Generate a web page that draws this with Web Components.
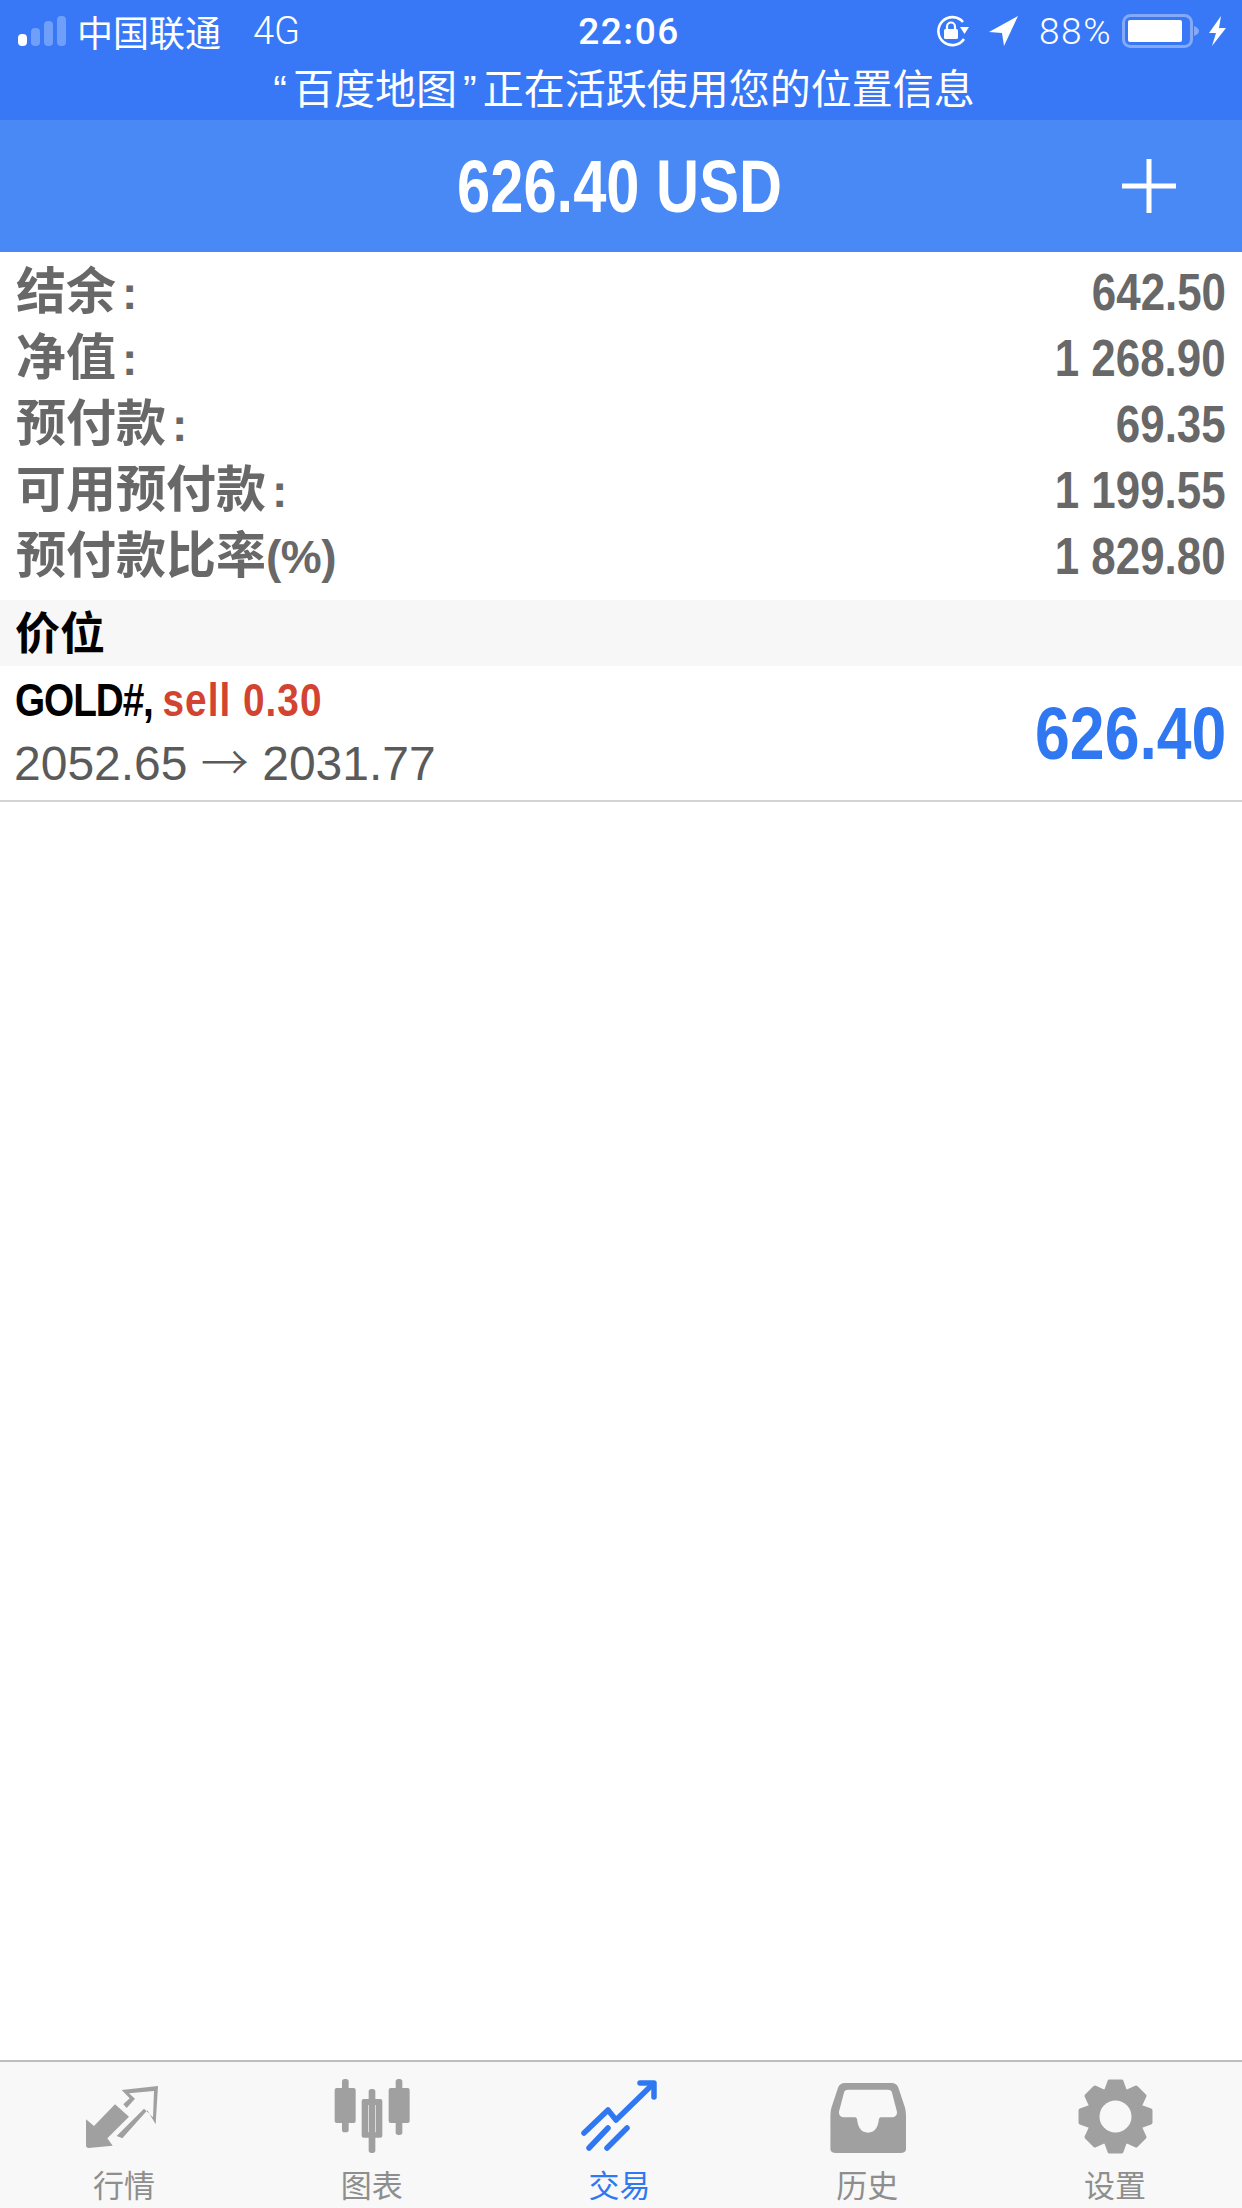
<!DOCTYPE html>
<html lang="zh">
<head>
<meta charset="utf-8">
<style>
  html, body { margin: 0; padding: 0; background: #fff; }
  body { width: 1242px; height: 2208px; overflow: hidden; display: flex; flex-direction: column;
    font-family: "Liberation Sans", "Noto Sans CJK SC", sans-serif; }
  main-list { flex: 1; display: block; }
</style>
</head>
<body>
<status-bar></status-bar>
<top-header amount="626.40 USD"></top-header>
<main-list>
  <account-row label="结余" colon value="642.50"></account-row>
  <account-row label="净值" colon value="1 268.90"></account-row>
  <account-row label="预付款" colon value="69.35"></account-row>
  <account-row label="可用预付款" colon value="1 199.55"></account-row>
  <account-row label="预付款比率" suffix="(%)" value="1 829.80"></account-row>
  <section-head>价位</section-head>
  <position-row symbol="GOLD#," side="sell 0.30" open="2052.65" close="2031.77" profit="626.40"></position-row>
</main-list>
<tab-bar></tab-bar>

<script>
const LATIN = '"Liberation Sans", "Noto Sans CJK SC", sans-serif';
const CJK = '"Noto Sans CJK SC", sans-serif';

class StatusBar extends HTMLElement {
  connectedCallback() {
    this.attachShadow({ mode: "open" }).innerHTML = `
      <style>
        :host { display: block; height: 120px; background: #3878f6; color: #fff; font-family: ${LATIN}; }
        .top { height: 62px; display: grid; grid-template-columns: 1fr auto 1fr; align-items: center; padding: 0 16px 0 18px; }
        .left, .right { display: flex; align-items: center; }
        .right { justify-content: flex-end; }
        .signal { display: flex; align-items: flex-end; gap: 4px; height: 30px; margin-right: 11px; }
        .signal i { width: 9px; border-radius: 4px; background: #6f9ff8; }
        .carrier { font-size: 36px; }
        .net { font-size: 38px; margin-left: 32px; font-family: Roboto, sans-serif; font-weight: 300; }
        .time { font-family: Roboto, sans-serif; font-weight: 500; font-size: 37px; letter-spacing: 1.5px; margin-left: 14px; }
        .pct { font-family: Roboto, sans-serif; font-weight: 300; font-size: 37px; letter-spacing: 1.5px; margin: 0 10px 0 21px; }
        .note { height: 58px; text-align: center; font-size: 41px; line-height: 56px; }
        .q { margin: 0 6px; }
        svg { display: block; }
      </style>
      <div class="top">
        <div class="left">
          <div class="signal"><i style="height:12px;background:#fff"></i><i style="height:18px"></i><i style="height:25px"></i><i style="height:30px"></i></div>
          <span class="carrier">中国联通</span><span class="net">4G</span>
        </div>
        <span class="time">22:06</span>
        <div class="right">
          <svg width="33" height="32" viewBox="0 0 33 32"><path d="M28 24A14 14 0 1 1 27 7" fill="none" stroke="#fff" stroke-width="2.600"/><path d="M24 12h9l-4.500 7z" fill="#fff"/><rect x="8" y="14" width="14" height="10" rx="1.500" fill="#fff"/><path d="M11 14v-2.500a4 4 0 0 1 8 0v2.500" fill="none" stroke="#fff" stroke-width="2.200"/></svg>
          <svg style="margin-left:20px" width="29" height="30" viewBox="0 0 29 30"><path d="M29 0 L0 16 L13 17 L15 30Z" fill="#fff"/></svg>
          <span class="pct">88%</span>
          <svg width="77" height="34" viewBox="0 0 77 34"><rect x="1.500" y="1.500" width="68" height="31" rx="7" fill="none" stroke="#83aaf9" stroke-width="3"/><rect x="6" y="6" width="54" height="22" rx="2" fill="#fff"/><path d="M72 12c3 1 5 3 5 5s-2 4-5 5z" fill="#83aaf9"/></svg>
          <svg style="margin-left:10px" width="17" height="30" viewBox="0 0 17 30"><path d="M12 0 L0 17 H7 L3 30 L17 12 H10Z" fill="#fff"/></svg>
        </div>
      </div>
      <div class="note"><span class="q">“</span>百度地图<span class="q">”</span>正在活跃使用您的位置信息</div>`;
  }
}

class TopHeader extends HTMLElement {
  connectedCallback() {
    this.attachShadow({ mode: "open" }).innerHTML = `
      <style>
        :host { display: grid; grid-template-columns: 1fr auto 1fr; align-items: center; height: 132px; background: #4889f6; color: #fff; }
        .amt { grid-column: 2; font-family: ${LATIN}; font-weight: 700; font-size: 74px; transform: scaleX(.806); margin-right: 3px; }
        svg { justify-self: end; margin-right: 66px; display: block; }
      </style>
      <span class="amt">${this.getAttribute("amount")}</span>
      <svg width="54" height="54" viewBox="0 0 54 54"><path d="M24.500 0h5v24.500h24.500v5h-24.500v24.500h-5v-24.500h-24.500v-5h24.500z" fill="#fff"/></svg>`;
  }
}

class AccountRow extends HTMLElement {
  connectedCallback() {
    const colon = this.hasAttribute("colon") ? `<span class="c">:</span>` : "";
    const suffix = this.getAttribute("suffix");
    this.attachShadow({ mode: "open" }).innerHTML = `
      <style>
        :host { display: flex; align-items: center; justify-content: space-between; height: 66px; padding: 0 16px; color: #686868; }
        :host(:first-child) { margin-top: 7px; }
        .l { font-family: ${CJK}; font-weight: 700; font-size: 50px; line-height: 60px; height: 60px; margin-bottom: 10px; display: flex; align-items: baseline; }
        .c { font-family: ${LATIN}; font-size: 46px; margin-left: 6px; }
        .s { font-family: ${LATIN}; font-size: 46px; letter-spacing: -.5px; }
        .v { font-family: ${LATIN}; font-weight: 700; font-size: 51px; transform: scaleX(.86); transform-origin: right center; }
      </style>
      <span class="l">${this.getAttribute("label")}${colon}${suffix ? `<span class="s">${suffix}</span>` : ""}</span>
      <span class="v">${this.getAttribute("value")}</span>`;
  }
}

class SectionHead extends HTMLElement {
  connectedCallback() {
    this.attachShadow({ mode: "open" }).innerHTML = `
      <style>
        :host { display: flex; align-items: center; height: 66px; box-sizing: border-box; padding: 0 0 5px 15px; margin-top: 11px; background: #f7f7f7; color: #000;
          font-family: ${CJK}; font-weight: 700; font-size: 45px; }
      </style><slot></slot>`;
  }
}

class PositionRow extends HTMLElement {
  connectedCallback() {
    this.attachShadow({ mode: "open" }).innerHTML = `
      <style>
        :host { display: flex; justify-content: space-between; height: 136px; box-sizing: border-box; border-bottom: 2px solid #d3d3d3; padding: 0 16px 0 15px; }
        .l { display: flex; flex-direction: column; align-items: flex-start; gap: 7px; padding-top: 9px; }
        .t { font-weight: 700; font-size: 46px; line-height: 50px; color: #000; letter-spacing: -1.300px; transform: scaleX(.843); transform-origin: left center; white-space: nowrap; }
        .t b { color: #d24431; font-weight: 700; letter-spacing: 1.200px; }
        .p { font-size: 48px; line-height: 54px; color: #5a5a5a; margin-left: -1px; }
        .a { font-family: ${CJK}; font-weight: 300; }
        .v { align-self: center; font-weight: 700; font-size: 74px; color: #2f78f2; transform: scaleX(.845); transform-origin: right center; }
      </style>
      <div class="l">
        <div class="t">${this.getAttribute("symbol")} <b>${this.getAttribute("side")}</b></div>
        <div class="p">${this.getAttribute("open")} <span class="a">→</span> ${this.getAttribute("close")}</div>
      </div>
      <div class="v">${this.getAttribute("profit")}</div>`;
  }
}

// 8 toothed gear outline, centred on 38.5,37.5
function gearPath() {
  const pts = [];
  for (let i = 0; i < 8; i++) {
    const a = (i * Math.PI) / 4 - Math.PI / 2;
    [[-0.36, 27], [-0.17, 35.5], [0.17, 35.5], [0.36, 27]].forEach(([d, r]) => {
      pts.push(`${(38.5 + r * Math.cos(a + d)).toFixed(1)} ${(37.5 + r * Math.sin(a + d)).toFixed(1)}`);
    });
  }
  return "M" + pts.join("L") + "Z";
}

const ICONS = {
  quotes: `<svg width="90" height="80" viewBox="0 0 270 240"><path d="M21 130V208q0 8 8 8l72-7-16-22 65-65-42-37-63 65z" fill="currentColor"/><path fill-rule="evenodd" d="M128 42 237 30 230 145 205 103 130 187 113 180 195 98 222 124 225 45 150 52 168 68 143 96 133 85 152 67Z" fill="currentColor"/></svg>`,
  chart: `<svg width="78" height="74" viewBox="1000 90 234 222"><g fill="currentColor"><rect x="1027" y="90" width="20" height="160" rx="8"/><rect x="1005" y="117" width="63" height="105" rx="6"/><rect x="1188" y="90" width="20" height="168" rx="8"/><rect x="1167" y="117" width="63" height="105" rx="6"/><rect x="1107" y="120" width="20" height="192" rx="8"/><path fill-rule="evenodd" d="M1092 150h50a6 6 0 0 1 6 6v104a6 6 0 0 1-6 6h-50a6 6 0 0 1-6-6v-104a6 6 0 0 1 6-6zM1105 168v82h24v-82z"/></g></svg>`,
  trade: `<svg width="79" height="72" viewBox="0 0 79 72"><g fill="none" stroke="currentColor" stroke-width="5.500" stroke-linecap="round" stroke-linejoin="round"><path d="M4 53 28 30 36 40 72 5"/><path d="M60 3H74V17"/><path d="M9 68 28 48"/><path d="M27 68 47 48"/></g></svg>`,
  history: `<svg style="margin-top:3px" width="77" height="70" viewBox="695 98 162 210" preserveAspectRatio="none"><path fill-rule="evenodd" fill="currentColor" d="M725 98h102q10 0 14 14l14 60q2 10 2 24v100q0 12-12 12h-135q-12 0-12-12v-100q0-14 2-24l14-60q4-14 14-14zM735 118q-6 0-8 6l-11 60q-1 12 8 17h26q3 0 4 6q3 40 23 40t23-40q1-6 4-6h26q9-5 8-17l-11-60q-2-6-8-6z"/></svg>`,
  settings: `<svg width="77" height="75" viewBox="0 0 77 75"><path d="${gearPath()}" fill="currentColor" stroke="currentColor" stroke-width="4" stroke-linejoin="round"/><circle cx="38.500" cy="37.500" r="16" fill="#f8f8f8"/></svg>`,
};

class TabItem extends HTMLElement {
  connectedCallback() {
    const active = this.hasAttribute("active");
    this.attachShadow({ mode: "open" }).innerHTML = `
      <style>
        :host { display: flex; flex: 1; flex-direction: column; align-items: center; color: ${active ? "#2f78f2" : "#a0a0a0"}; }
        .ic { height: 80px; margin-top: 14px; display: flex; align-items: center; justify-content: center; }
        .lb { font-family: ${CJK}; font-size: 31px; line-height: 34px; margin-top: 11px; color: ${active ? "#2f78f2" : "#8e8e8e"}; }
        svg { display: block; }
      </style>
      <div class="ic">${ICONS[this.getAttribute("icon")]}</div>
      <div class="lb"><slot></slot></div>`;
  }
}

class TabBar extends HTMLElement {
  connectedCallback() {
    this.attachShadow({ mode: "open" }).innerHTML = `
      <style>
        :host { display: flex; height: 148px; box-sizing: border-box; border-top: 2px solid #bdbdbd; background: #f8f8f8; padding-right: 3px; }
      </style>
      <tab-item icon="quotes">行情</tab-item>
      <tab-item icon="chart">图表</tab-item>
      <tab-item icon="trade" active>交易</tab-item>
      <tab-item icon="history">历史</tab-item>
      <tab-item icon="settings">设置</tab-item>`;
  }
}

customElements.define("status-bar", StatusBar);
customElements.define("top-header", TopHeader);
customElements.define("account-row", AccountRow);
customElements.define("section-head", SectionHead);
customElements.define("position-row", PositionRow);
customElements.define("tab-item", TabItem);
customElements.define("tab-bar", TabBar);
</script>
</body>
</html>
